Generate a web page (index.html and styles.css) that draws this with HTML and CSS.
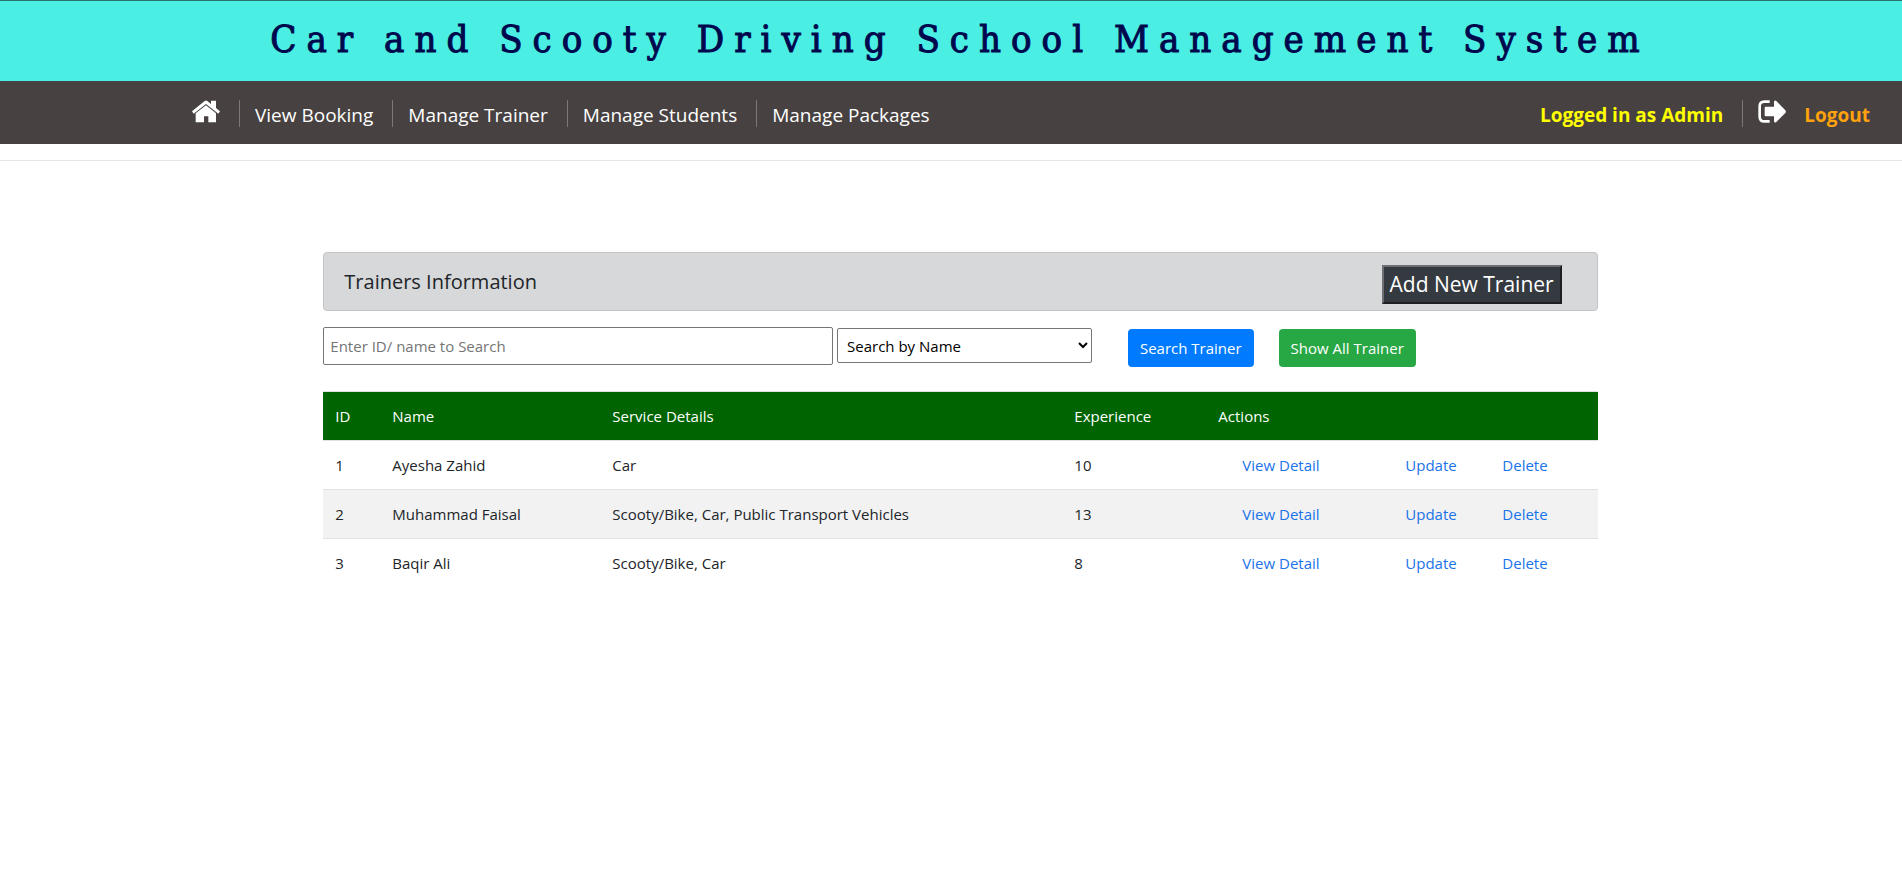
FILE: index.html
```html
<!DOCTYPE html>
<html lang="en">
<head>
<meta charset="utf-8">
<title>Car and Scooty Driving School Management System</title>
<link rel="stylesheet" href="styles.css">
</head>
<body>
<header class="banner">
  <h1 class="banner-title">Car and Scooty Driving School Management System</h1>
</header>
<nav class="navbar">
  <a class="nav-item nav-home" href="#" aria-label="Home">
    <svg class="nav-icon" viewBox="96 300 84 67" fill="#fff" aria-hidden="true">
      <path d="M96 333 134 302Q138 299 142 302L153 311V301H168V323L180 333 175 340 138 311 101 340Z"/>
      <path d="M138 315 168 339V366H145V348H132V366H107V339Z"/>
    </svg>
  </a>
  <a class="nav-item" href="#">View Booking</a>
  <a class="nav-item" href="#">Manage Trainer</a>
  <a class="nav-item" href="#">Manage Students</a>
  <a class="nav-item" href="#">Manage Packages</a>
  <span class="nav-item nav-user">Logged in as Admin</span>
  <a class="nav-item nav-logout" href="#">
    <svg class="nav-icon" viewBox="774 90 84 67" fill="#fff" aria-hidden="true">
      <path d="M809 94H793Q779 94 779 108V139Q779 153 793 153H809" fill="none" stroke="#fff" stroke-width="8"/>
      <path d="M797 109H822V94Q824 88 829 92L856 120Q859 124 856 128L829 155Q824 159 822 153V138H797Q794 138 794 135V112Q794 109 797 109Z"/>
    </svg>
    Logout
  </a>
</nav>
<hr class="divider">
<main class="content">
  <section class="card">
    <h2 class="card-title">Trainers Information</h2>
    <button class="add-button" type="button">Add New Trainer</button>
  </section>
  <form class="search">
    <input class="search-text" type="text" placeholder="Enter ID/ name to Search" aria-label="Enter ID or name to search">
    <select class="search-by" aria-label="Search by">
      <option>Search by Name</option>
      <option>Search by ID</option>
    </select>
    <button class="btn btn-primary" type="button">Search Trainer</button>
    <button class="btn btn-success" type="button">Show All Trainer</button>
  </form>
  <table class="trainers">
    <colgroup>
      <col class="col-id"><col class="col-name"><col class="col-service"><col class="col-experience"><col class="col-view"><col class="col-update"><col>
    </colgroup>
    <thead>
      <tr><th>ID</th><th>Name</th><th>Service Details</th><th>Experience</th><th colspan="3">Actions</th></tr>
    </thead>
    <tbody>
      <tr><td>1</td><td>Ayesha Zahid</td><td>Car</td><td>10</td><td class="view"><a href="#">View Detail</a></td><td><a href="#">Update</a></td><td><a href="#">Delete</a></td></tr>
      <tr><td>2</td><td>Muhammad Faisal</td><td>Scooty/Bike, Car, Public Transport Vehicles</td><td>13</td><td class="view"><a href="#">View Detail</a></td><td><a href="#">Update</a></td><td><a href="#">Delete</a></td></tr>
      <tr><td>3</td><td>Baqir Ali</td><td>Scooty/Bike, Car</td><td>8</td><td class="view"><a href="#">View Detail</a></td><td><a href="#">Update</a></td><td><a href="#">Delete</a></td></tr>
    </tbody>
  </table>
</main>
</body>
</html>
```
FILE: styles.css
```css
* {
  box-sizing: border-box;
}

body {
  margin: 0;
  background: #fff;
  color: #212529;
  font-family: "Open Sans", "Noto Sans", sans-serif;
  font-size: 15px;
  line-height: 24px;
}

a {
  color: #1a73e8;
  text-decoration: none;
}

.banner {
  border-top: 1px solid #2d6f6f;
  background: #4beee3;
  padding: 14px 0 18px 18px;
  text-align: center;
}

.banner-title {
  margin: 0;
  color: #00084d;
  font-family: "DejaVu Serif Condensed", "DejaVu Serif", serif;
  font-size: 38px;
  font-weight: 400;
  line-height: 48px;
  letter-spacing: 10px;
  -webkit-text-stroke: 1px #00084d;
}

.navbar {
  display: flex;
  align-items: center;
  background: #474141;
  padding: 18px 32px 16px 192px;
  font-size: 19px;
}

.nav-item {
  display: flex;
  align-items: center;
  height: 29px;
  padding-top: 2px;
  color: #fff;
}

.nav-item + .nav-item::before {
  content: "";
  width: 1px;
  height: 27px;
  margin: 0 15px 2px 19px;
  background: #7c7878;
}

.nav-icon {
  width: 28px;
  height: 23px;
  margin-bottom: 6px;
}

.nav-item.nav-user {
  margin-left: auto;
  color: #ff0;
  font-weight: 700;
}

.nav-item.nav-user::before {
  display: none;
}

.nav-item.nav-logout {
  color: #ffa20d;
  font-weight: 700;
}

.nav-logout .nav-icon {
  margin-right: 18px;
}

.divider {
  margin: 16px 0 0;
  border: 0;
  border-top: 1px solid #e5e5e5;
}

.content {
  width: 67%;
  margin: 91px 0 0 17%;
}

.card {
  display: flex;
  align-items: center;
  justify-content: space-between;
  border: 1px solid #c3c4c6;
  border-radius: 4px;
  background: #d6d8d9;
  padding: 12px 35px 6px 20px;
}

.card-title {
  margin: 0 0 6px;
  font-size: 20px;
  font-weight: 400;
  line-height: 28px;
}

.add-button {
  border: 2px outset #6c7075;
  background: #343a40;
  padding: 1px 6px;
  color: #fff;
  font: 21px/33px "Open Sans", "Noto Sans", sans-serif;
}

.search {
  display: flex;
  align-items: flex-start;
  padding-top: 16px;
}

.search-text {
  width: 40%;
  height: 38px;
  border: 1px solid #767676;
  border-radius: 2px;
  padding: 1px 6px;
  font: inherit;
}

.search-text::placeholder {
  color: #757575;
}

.search-by {
  width: 20%;
  height: 35px;
  margin: 1px 36px 0 4px;
  border: 1px solid #767676;
  border-radius: 2px;
  background: #fff;
  padding: 0 5px;
  color: #000;
  font: inherit;
}

.btn {
  margin: 2px 25px 0 0;
  border: 0;
  border-radius: 4px;
  padding: 7px 12px;
  color: #fff;
  font: inherit;
}

.btn-primary {
  background: #007bff;
}

.btn-success {
  background: #28a745;
}

.trainers {
  width: 100%;
  margin-top: 24px;
  border-collapse: collapse;
  table-layout: fixed;
}

.col-id {
  width: 57px;
}

.col-name {
  width: 220px;
}

.col-service {
  width: 462px;
}

.col-experience {
  width: 144px;
}

.col-view {
  width: 187px;
}

.col-update {
  width: 97px;
}

.trainers th,
.trainers td {
  border-top: 1px solid #dee2e6;
  padding: 12px;
  text-align: left;
  font-weight: 400;
}

.trainers thead {
  background: #006400;
  color: #fff;
}

.trainers tbody tr:nth-child(even) {
  background: #f2f2f2;
}

.trainers .view {
  padding-left: 36px;
}
```
